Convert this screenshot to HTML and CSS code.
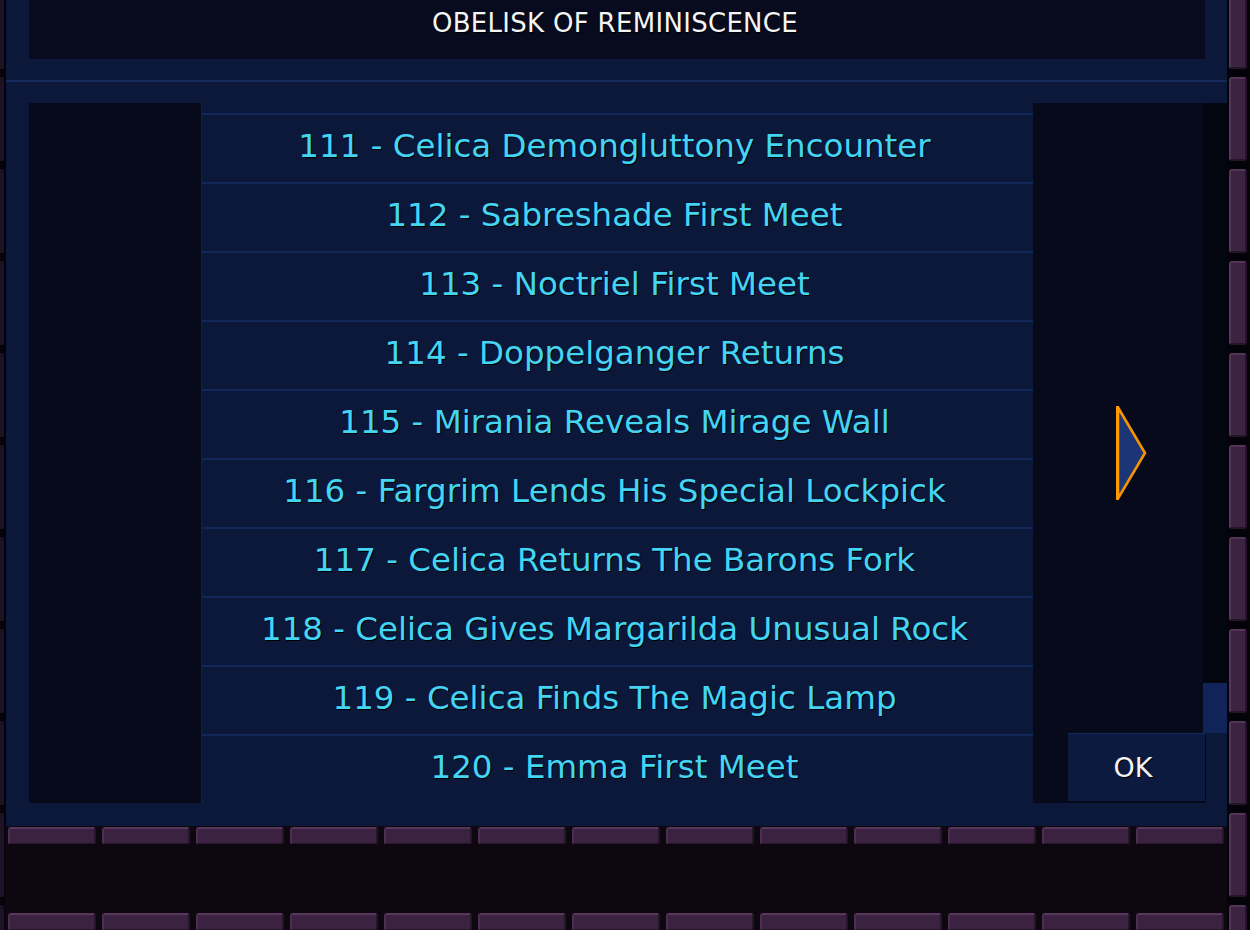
FILE: index.html
```html
<!DOCTYPE html>
<html lang="en">
<head>
<meta charset="utf-8">
<title>Obelisk of Reminiscence</title>
<link rel="stylesheet" href="styles.css">
</head>
<body>
<div class="screen">
  <div class="wall wall-left">
    <div class="vcol">
      <span class="vbrick"></span><span class="vbrick"></span><span class="vbrick"></span><span class="vbrick"></span><span class="vbrick"></span>
      <span class="vbrick"></span><span class="vbrick"></span><span class="vbrick"></span><span class="vbrick"></span><span class="vbrick"></span>
      <span class="vbrick"></span>
    </div>
  </div>
  <div class="middle">
    <div class="panel">
      <div class="title-wrap"><div class="title">OBELISK OF REMINISCENCE</div></div>
      <div class="divider"></div>
      <div class="lower">
        <div class="side side-left"></div>
        <ul class="list">
          <li class="row">111 - Celica Demongluttony Encounter</li>
          <li class="row">112 - Sabreshade First Meet</li>
          <li class="row">113 - Noctriel First Meet</li>
          <li class="row">114 - Doppelganger Returns</li>
          <li class="row">115 - Mirania Reveals Mirage Wall</li>
          <li class="row">116 - Fargrim Lends His Special Lockpick</li>
          <li class="row">117 - Celica Returns The Barons Fork</li>
          <li class="row">118 - Celica Gives Margarilda Unusual Rock</li>
          <li class="row">119 - Celica Finds The Magic Lamp</li>
          <li class="row">120 - Emma First Meet</li>
        </ul>
        <div class="side side-right">
          <button class="next" aria-label="Next page">
            <svg width="31" height="94" viewBox="0 0 31 94">
              <polygon points="2,1.5 29,47 2,92.5" fill="#1b3576" stroke="#f59300" stroke-width="2.6" stroke-linejoin="miter"/>
              <rect x="0" y="0" width="3" height="94" fill="#ff9a00"/>
            </svg>
          </button>
          <button class="ok">OK</button>
        </div>
        <div class="scrollbar"><div class="track"></div><div class="thumb"></div></div>
      </div>
    </div>
    <div class="floor">
      <div class="brick-row">
        <span class="hbrick"></span><span class="hbrick"></span><span class="hbrick"></span><span class="hbrick"></span><span class="hbrick"></span>
        <span class="hbrick"></span><span class="hbrick"></span><span class="hbrick"></span><span class="hbrick"></span><span class="hbrick"></span>
        <span class="hbrick"></span><span class="hbrick"></span><span class="hbrick"></span>
      </div>
      <div class="floor-gap"></div>
      <div class="brick-row">
        <span class="hbrick"></span><span class="hbrick"></span><span class="hbrick"></span><span class="hbrick"></span><span class="hbrick"></span>
        <span class="hbrick"></span><span class="hbrick"></span><span class="hbrick"></span><span class="hbrick"></span><span class="hbrick"></span>
        <span class="hbrick"></span><span class="hbrick"></span><span class="hbrick"></span>
      </div>
    </div>
  </div>
  <div class="wall wall-right">
    <div class="vcol">
      <span class="vbrick"></span><span class="vbrick"></span><span class="vbrick"></span><span class="vbrick"></span><span class="vbrick"></span>
      <span class="vbrick"></span><span class="vbrick"></span><span class="vbrick"></span><span class="vbrick"></span><span class="vbrick"></span>
      <span class="vbrick"></span>
    </div>
  </div>
</div>
</body>
</html>
```

FILE: styles.css
```css
* { box-sizing: border-box; }

html, body {
  margin: 0;
  padding: 0;
  background: #0d0810;
}

body {
  width: 1250px;
  height: 930px;
  overflow: hidden;
  font-family: "DejaVu Sans", "Liberation Sans", sans-serif;
}

.screen {
  width: 1250px;
  height: 930px;
  display: flex;
}

.middle {
  width: 1222px;
  display: flex;
  flex-direction: column;
}

/* ---- walls ---- */
.wall {
  overflow: hidden;
  background: #05030a;
  height: 930px;
}

.wall-left {
  width: 5px;
}

.wall-right {
  width: 23px;
  padding-left: 2px;
}

.vcol {
  display: flex;
  flex-direction: column;
  gap: 8px;
  margin-top: -15px;
}

.vbrick {
  display: block;
  width: 18px;
  height: 84px;
  flex: none;
  background: #3b2341;
  border-left: 2px solid #55355a;
  border-top: 2px solid #55355a;
  border-right: 2px solid #26152a;
  border-bottom: 2px solid #26152a;
  border-radius: 3px;
}

.wall-left .vbrick {
  width: 4px;
  background: #1f1126;
  border: 0;
  border-radius: 0 2px 2px 0;
}

/* ---- panel ---- */
.panel {
  height: 826px;
  background: #0b1839;
  border-left: 1px solid #03040b;
  display: flex;
  flex-direction: column;
}

.title-wrap {
  padding: 0 22px 21px 23px;
}

.title {
  height: 59px;
  background: #070b1d;
  color: #f4f4f4;
  font-size: 26px;
  line-height: 30px;
  padding: 8px 4px 0 0;
  letter-spacing: 0.3px;
  text-align: center;
  text-shadow: 1px 1px 0 #000;
}

.divider {
  height: 2px;
  background: #142a5d;
}

.lower {
  display: grid;
  grid-template-columns: 172px 832px 170px 24px;
  grid-template-rows: 700px;
  padding: 21px 0 23px 23px;
}

.side {
  background: #060a1a;
}

.side-right {
  display: grid;
}

.list {
  list-style: none;
  margin: 0;
  padding: 10px 0 0;
  display: grid;
  grid-template-rows: repeat(10, 1fr);
  background: #0b1839;
  border-left: 1px solid #0f1f49;
}

.row {
  display: flex;
  align-items: center;
  justify-content: center;
  border-top: 2px solid #12285b;
  padding: 0 6px 6px 0;
  color: #44d4f4;
  font-size: 32.5px;
  white-space: nowrap;
  text-shadow: 1px 1px 0 #000;
}

.next {
  grid-area: 1 / 1;
  justify-self: start;
  align-self: center;
  margin: 0 0 0 83px;
  padding: 0;
  border: 0;
  background: none;
  width: 31px;
  height: 94px;
  display: block;
}

.next svg {
  display: block;
}

.ok {
  grid-area: 1 / 1;
  justify-self: end;
  align-self: end;
  margin: 0 -3px 0 0;
  width: 139px;
  height: 70px;
  background: #0c1a40;
  border: 1px solid #050a1a;
  border-bottom-width: 2px;
  border-top-color: #13275a;
  color: #f4f4f4;
  font-family: "DejaVu Sans", sans-serif;
  font-size: 27px;
  padding: 0 7px 0 0;
  text-shadow: 1px 1px 0 #000;
}

.scrollbar {
  align-self: start;
  display: flex;
  flex-direction: column;
}

.track {
  height: 580px;
  background: #03050f;
}

.thumb {
  height: 50px;
  background: #10245a;
}

/* ---- floor ---- */
.floor {
  padding-top: 1px;
  display: flex;
  flex-direction: column;
  background: #0d0810;
}

.brick-row {
  display: flex;
  gap: 6px;
  padding-left: 3px;
  height: 17px;
  flex: none;
  overflow: hidden;
}

.floor-gap {
  height: 69px;
  flex: none;
}

.hbrick {
  display: block;
  width: 88px;
  height: 18px;
  flex: none;
  background: #3a2240;
  border-top: 2px solid #58375c;
  border-left: 2px solid #4b2e50;
  border-right: 2px solid #25142a;
  border-bottom: 2px solid #25142a;
  border-radius: 3px;
}
```
